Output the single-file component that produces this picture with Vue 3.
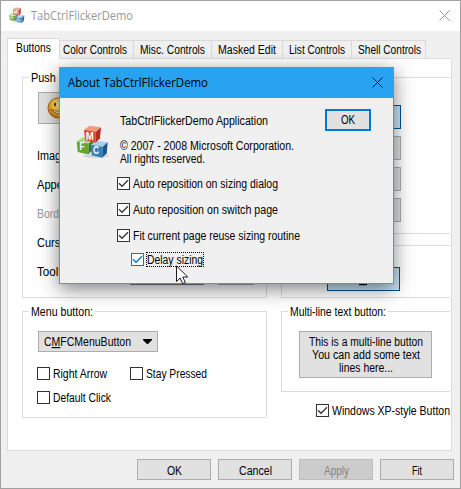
<script setup>
import { h } from 'vue'

// Text run fitted to a fixed width; `u` is the index of the access key letter.
const Label = (props) => {
  const s = props.text
  const u = props.u
  const body = u === undefined
    ? s
    : [s.slice(0, u), h('tspan', { 'text-decoration': 'underline' }, s[u]), s.slice(u + 1)]
  return h('svg', { class: 'label', width: props.w, height: 14 }, [
    h('text', { x: 0, y: 11, textLength: props.w, lengthAdjust: 'spacingAndGlyphs' }, body),
  ])
}
Label.props = ['text', 'w', 'u']

const Check = (props) => h('span', { class: ['box', props.hot && 'hot'] }, props.on
  ? [h('svg', { width: 11, height: 11, viewBox: '0 0 11 11' }, [
      h('path', { d: 'M1 5.3 4 8.3 10 2.3', fill: 'none', stroke: 'currentColor', 'stroke-width': 1.3 }),
    ])]
  : [])
Check.props = { on: Boolean, hot: Boolean }

const Cross = () => h('svg', { class: 'cross', width: 11, height: 11 }, [
  h('path', { d: 'M.5.5 10.5 10.5M10.5.5.5 10.5', stroke: 'currentColor', fill: 'none' }),
])

const cube = (x, y, top, left, right, letter, lx, ly, lw) => h('g', { transform: `translate(${x} ${y})` }, [
  h('path', { d: 'M0 4 5.5 0 17 1.5 12 6Z', fill: top }),
  h('path', { d: 'M0 4 12 6 11.5 17 1 14.5Z', fill: left }),
  h('path', { d: 'M12 6 17 1.5 16 12.5 11.5 17Z', fill: right }),
  h('text', { x: lx, y: ly, textLength: lw, lengthAdjust: 'spacingAndGlyphs', class: 'cube-letter' }, letter),
])
const Cubes = (props) => h('svg', { class: 'cubes', width: props.size, height: props.size, viewBox: '0 0 33 33' }, [
  h('ellipse', { cx: 20, cy: 31, rx: 13, ry: 1.8, fill: '#000', opacity: 0.12 }),
  cube(0.7, 12.5, '#b4d889', '#65a637', '#3c7a22', 'F', 2.8, 12.8, 5),
  cube(14.7, 15.7, '#a6cfee', '#347fbe', '#1c568f', 'C', 2.4, 13.6, 6),
  cube(8, 0.8, '#f39a85', '#dd4b31', '#b52c1e', 'M', 1.8, 13.8, 8),
])
Cubes.props = ['size']

const tabs = [
  { text: 'Color Controls', w: 64, size: 'w74' },
  { text: 'Misc. Controls', w: 65, size: 'w78' },
  { text: 'Masked Edit', w: 58, size: 'w71' },
  { text: 'List Controls', w: 56, size: 'w69' },
  { text: 'Shell Controls', w: 63, size: 'w74' },
]
const rows = [
  { text: 'Image:', w: 33 },
  { text: 'Appearance:', w: 63 },
  { text: 'Border:', w: 34, off: true },
  { text: 'Cursor:', w: 36 },
]
const options = [
  { text: 'Auto reposition on sizing dialog', w: 145 },
  { text: 'Auto reposition on switch page', w: 145 },
  { text: 'Fit current page reuse sizing routine', w: 167 },
]
</script>

<template>
  <div class="window">
    <header class="title">
      <Cubes :size="16" />
      <Label text="TabCtrlFlickerDemo" :w="102" />
      <Cross />
    </header>

    <nav class="tabs">
      <span class="tab active"><Label text="Buttons" :w="35" /></span>
      <span v-for="t in tabs" :key="t.text" class="tab" :class="t.size"><Label :text="t.text" :w="t.w" /></span>
    </nav>

    <main class="page">
      <div class="col left">
        <section class="group push">
          <div class="legend"><Label text="Push button:" :w="61" /></div>
          <div class="btn smile">
            <svg width="22" height="22" viewBox="0 0 22 22">
              <defs>
                <radialGradient id="face" cx=".6" cy=".35" r=".65">
                  <stop offset="0" stop-color="#fff6b8" />
                  <stop offset=".6" stop-color="#ffc83a" />
                  <stop offset="1" stop-color="#c47a10" />
                </radialGradient>
              </defs>
              <circle cx="11" cy="11" r="10" fill="url(#face)" stroke="#a86a14" />
              <ellipse cx="8" cy="7.5" rx=".9" ry="2" fill="#3b2505" />
              <ellipse cx="14" cy="7.5" rx=".9" ry="2" fill="#3b2505" />
              <path d="M4 12.5q7 8 14 0q-7 3.5-14 0Z" fill="#fff" stroke="#7a4308" stroke-width=".8" />
            </svg>
          </div>
          <div class="rows">
            <div v-for="r in rows" :key="r.text" class="row" :class="{ off: r.off }"><Label :text="r.text" :w="r.w" /></div>
            <div class="row tooltip">
              <Label text="Tooltip:" :w="37" />
              <span class="btn b1"></span><span class="btn b2"></span>
            </div>
          </div>
        </section>

        <section class="group menu">
          <div class="legend"><Label text="Menu button:" :w="62" /></div>
          <div class="btn menubtn">
            <Label text="CMFCMenuButton" :w="87" :u="1" />
            <svg width="9" height="5"><path d="M0 0H9V1L5 5H4L0 1Z" fill="#000" /></svg>
          </div>
          <div class="checks">
            <div class="check"><Check /><Label text="Right Arrow" :w="54" /></div>
            <div class="check"><Check /><Label text="Stay Pressed" :w="61" /></div>
            <div class="check"><Check /><Label text="Default Click" :w="58" /></div>
          </div>
        </section>
      </div>

      <div class="col right">
        <section class="group open radios">
          <div class="btn blue"></div>
          <div class="btn"><Label text="2" :w="6" /></div>
          <div class="btn"><Label text="3" :w="6" /></div>
          <div class="btn"><Label text="4" :w="6" /></div>
        </section>
        <section class="group open cmd">
          <div class="btn blue">
            <svg width="9" height="12"><circle cx="4" cy="7" r="3.6" fill="#27803a" /></svg>
            <Label text="C" :w="8" :u="0" />
          </div>
        </section>
        <section class="group open multi">
          <div class="legend"><Label text="Multi-line text button:" :w="96" /></div>
          <div class="btn lines">
            <Label text="This is a multi-line button" :w="114" />
            <Label text="You can add some text" :w="108" />
            <Label text="lines here..." :w="54" />
          </div>
        </section>
        <div class="check xp"><Check on /><Label text="Windows XP-style Button" :w="118" /></div>
      </div>
    </main>

    <footer class="footer">
      <div class="btn"><Label text="OK" :w="15" /></div>
      <div class="btn"><Label text="Cancel" :w="33" /></div>
      <div class="btn disabled"><Label text="Apply" :w="25" /></div>
      <div class="btn"><Label text="Fit" :w="10" /></div>
    </footer>

    <div class="dialog">
      <header class="dlg-title">
        <Label text="About TabCtrlFlickerDemo" :w="140" />
        <Cross />
      </header>
      <div class="dlg-body">
        <Cubes :size="33" />
        <div class="info">
          <div class="about">
            <Label text="TabCtrlFlickerDemo Application" :w="148" />
            <Label class="copy" text="© 2007 - 2008 Microsoft Corporation." :w="174" />
            <Label class="rights" text="All rights reserved." :w="85" />
          </div>
          <div v-for="o in options" :key="o.text" class="check"><Check on /><Label :text="o.text" :w="o.w" /></div>
          <div class="check delay"><Check on hot /><span class="focus"><Label text="Delay sizing" :w="56" /></span></div>
        </div>
        <div class="btn ok"><Label text="OK" :w="14" /></div>
      </div>
      <svg class="cursor" width="13" height="20" viewBox="0 0 13 20">
        <path d="M.5 1V16.5L4.2 13 6.7 18.7 9.3 17.6 6.8 12H11.8Z" fill="#fff" stroke="#1c1c2c" />
      </svg>
    </div>
  </div>
</template>

<style>
body { margin: 0; overflow: hidden; }
.label, .cubes, .cross { display: block; flex: none; overflow: visible; }
.label text { fill: currentColor; }
.cube-letter { font: bold 10px "Liberation Sans", sans-serif; fill: #fff; }
.box { width: 13px; height: 13px; box-sizing: border-box; border: 1px solid #333; background: #fff; color: #333; flex: none; }
.box svg { display: block; }
.box.hot { border-color: #0078d7; color: #0078d7; }
</style>

<style scoped>
.window {
  position: relative; box-sizing: border-box; width: 461px; height: 489px;
  border: 1px solid #a0a0a0; background: #f0f0f0; color: #000; overflow: hidden;
  font: 12px "Liberation Sans", Arial, sans-serif;
}
.title { display: flex; height: 30px; padding: 6px 10px 0 8px; box-sizing: border-box; background: #fff; color: #999; font-family: "Open Sans", sans-serif; }
.title .label { margin: 2px 0 0 6px; }
.title .cubes { opacity: .85; }
.title .cross { margin: 3px 0 0 auto; }

.tabs { display: flex; align-items: flex-end; height: 20px; margin: 7px 0 0 6px; }
.tab { box-sizing: border-box; height: 18px; border: 1px solid #d9d9d9; border-width: 1px 1px 0 0; padding: 2px 0 0 6px; }
.tab.active { width: 53px; height: 21px; border-left-width: 1px; margin-bottom: -1px; background: #fff; z-index: 1; padding: 2px 0 0 8px; }
.w74 { width: 74px; padding-left: 3px; }
.w78 { width: 78px; }
.w71 { width: 71px; }
.w69 { width: 69px; }
.tab.w74:last-child { padding-left: 6px; }

.page { display: flex; gap: 14px; box-sizing: border-box; width: 445px; height: 393px; margin-left: 6px; padding: 18px 0 0 14px; border: 1px solid #dcdcdc; background: #fff; }
.col { display: flex; flex-direction: column; }
.left { width: 245px; gap: 13px; }
.right { width: 169px; }
.group { box-sizing: border-box; border: 1px solid #dcdcdc; }
.open { border-right: 0; }
.legend { width: max-content; margin: -7px 0 0 6px; padding: 0 2px; background: #fff; }
.btn { box-sizing: border-box; display: flex; align-items: center; justify-content: center; background: #e1e1e1; border: 1px solid #adadad; }
.btn.blue { background: #cce4f7; border-color: #005499; }

.push { height: 221px; }
.smile { width: 75px; height: 32px; margin: 7px 0 0 15px; justify-content: flex-start; padding-left: 8px; }
.rows { padding: 17px 0 0 14px; }
.row { display: flex; align-items: center; height: 29px; }
.off { color: #999; }
.b1 { width: 74px; height: 22px; margin: 5px 0 0 56px; border-color: #7a7a7a; background: #fff; }
.b2 { width: 36px; height: 22px; margin: 5px 0 0 14px; }

.menu { height: 107px; }
.menubtn { width: 120px; height: 21px; margin: 12px 0 0 15px; padding: 0 5px 0 5px; justify-content: space-between; }
.menubtn .label { margin-top: 1px; }
.check { display: flex; gap: 3px; }
.checks { display: grid; grid-template-columns: 93px auto; row-gap: 10px; margin: 15px 0 0 14px; }

.radios { height: 157px; padding: 27px 0 0 45px; }
.radios .btn { width: 74px; height: 24px; margin-bottom: 7px; padding-right: 6px; justify-content: flex-end; color: #0067b8; }
.cmd { height: 53px; margin-top: 11px; padding: 21px 0 0 45px; }
.cmd .btn { width: 73px; height: 24px; justify-content: flex-start; padding-left: 10px; gap: 12px; }
.multi { height: 81px; margin-top: 13px; }
.lines { flex-direction: column; width: 133px; height: 47px; margin: 12px 0 0 17px; }
.lines .label { margin-bottom: -1px; }
.xp { margin: 12px 0 0 35px; }

.footer { display: flex; gap: 7px; padding: 8px 0 0 136px; }
.footer .btn { width: 74px; height: 21px; }
.footer .label { margin-top: 2px; }
.disabled { background: #ccc; border-color: #bfbfbf; color: #838383; }

.dialog {
  position: absolute; left: 58px; top: 66px; box-sizing: border-box; width: 335px; height: 217px;
  border: 1px solid #2aa3f2; background: #f0f0f0; box-shadow: 0 5px 18px rgba(0, 0, 0, .5);
}
.dlg-title { display: flex; height: 30px; box-sizing: border-box; padding: 8px 10px 0 8px; background: #27a3f2; font-family: "Open Sans", sans-serif; }
.dlg-title .cross { margin: 1px 0 0 auto; }
.dlg-body { display: flex; padding-left: 16px; }
.dlg-body .cubes { margin-top: 27px; }
.info { width: 216px; box-sizing: border-box; padding: 16px 0 0 8px; }
.about { padding-left: 3px; height: 63px; }
.copy { margin-top: 11px; }
.rights { margin-top: -1px; }
.info .check { height: 26px; }
.info .delay { height: 16px; padding-left: 14px; margin-top: -2px; gap: 2px; }
.focus { height: 15px; margin-top: -1px; width: 58px; box-sizing: border-box; border: 1px dotted #000; }
.ok { width: 46px; height: 22px; margin-top: 11px; border: 2px solid #0078d7; }
.cursor { position: absolute; left: 116px; top: 197px; }
</style>
